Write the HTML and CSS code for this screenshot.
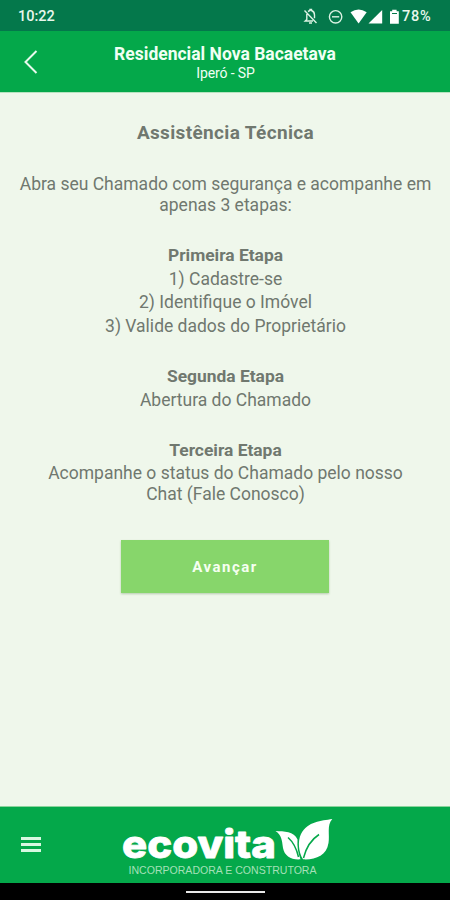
FILE: index.html
```html
<!DOCTYPE html>
<html lang="pt-BR">
<head>
<meta charset="utf-8">
<title>Assistência Técnica</title>
<link rel="stylesheet" href="styles.css">
</head>
<body>
<div class="status">
  <span class="clock">10:22</span>
  <svg class="status-icons" width="98" height="18" viewBox="302 7 98 18" fill="none" stroke="#dcf3e4" stroke-width="1.4">
    <path d="M304.500 9.500 316.500 22M308 10.500Q309 10 310 9.500V8.500H311.500V9.500Q314.500 10.500 314.500 14V17.200M306.800 13V18.500L305.200 20H313M309 22H312"/>
    <circle cx="335.600" cy="15.800" r="6.200"/><path d="M332 15.800H339.200"/>
    <g fill="#fff" stroke="none"><path d="M350.500 11.300Q358.600 5.800 366.700 11.300L358.600 22.500Z"/><path d="M382.200 9V22.500H368.500Z"/><path d="M390 10.200H392.200V8.700H396.600V10.200H398.800V22.800H390Z"/></g>
    <path d="M392 12.500H397" stroke="#04784b" stroke-width="1"/>
  </svg>
  <span class="battery">78%</span>
</div>
<header class="topbar">
  <svg class="back" width="16" height="26" viewBox="0 0 16 26" fill="none" stroke="#e8faed" stroke-width="2"><path d="M14.500 2 3.500 13 14.500 24"/></svg>
  <div class="heading"><div class="project">Residencial Nova Bacaetava</div><div class="city">Iperó - SP</div></div>
</header>
<main>
  <h1>Assistência Técnica</h1>
  <p class="intro">Abra seu Chamado com segurança e acompanhe em<br>apenas 3 etapas:</p>
  <section><h2>Primeira Etapa</h2><p>1) Cadastre-se</p><p>2) Identifique o Imóvel</p><p>3) Valide dados do Proprietário</p></section>
  <section><h2>Segunda Etapa</h2><p>Abertura do Chamado</p></section>
  <section><h2>Terceira Etapa</h2><p>Acompanhe o status do Chamado pelo nosso<br>Chat (Fale Conosco)</p></section>
  <button type="button">Avançar</button>
</main>
<footer>
  <div class="menu"><i></i><i></i><i></i></div>
  <svg class="logo" width="214" height="62" viewBox="120 815 214 62" fill="#fff">
    <text class="brand" x="122" y="858" textLength="154" lengthAdjust="spacingAndGlyphs">ecovita</text>
    <text class="tagline" x="128.500" y="874" textLength="188" lengthAdjust="spacingAndGlyphs">INCORPORADORA E CONSTRUTORA</text>
    <path d="M275.500 831C284 831.500 294 831 297.500 839.500C297 847 298 853 300.500 859.300C291 860 284.500 856 283 848C282 840 281.500 835 275.500 831Z"/>
    <path d="M332.300 819C326.500 825 330 835 328.500 843C326.500 856 315 860 303 859.300C298.500 852 297.500 841 301 834C308 821 321 821 332.300 819Z"/>
    <path d="M288 837.500Q295.500 844 298.500 857M319 834.500Q307.500 842 303.500 858" fill="none" stroke="#04a84a" stroke-width="1.500"/>
  </svg>
</footer>
<div class="nav"><i></i></div>
</body>
</html>
```
FILE: styles.css
```css
* { box-sizing: border-box; }
body { margin: 0; width: 450px; height: 900px; display: flex; flex-direction: column; overflow: hidden; background: #eff7eb; font-family: Roboto, sans-serif; color: #70786f; }
h1, h2, p { margin: 0; }
.status { height: 31px; flex: none; background: #04784b; color: #e8f7ed; display: flex; align-items: center; padding: 2px 17px 0 18px; font-size: 14.5px; font-weight: 500; }
.clock { flex: 1; }
.battery { width: 31px; margin-left: 2px; font-size: 14.5px; letter-spacing: 0.8px; }
.topbar { height: 61px; flex: none; background: #04a84a; color: #f0fff4; display: grid; grid-template-columns: 60px 1fr 60px; align-items: center; }
.back { margin-left: 22px; }
.heading { text-align: center; white-space: nowrap; padding-top: 2px; }
.project { font-size: 17.500px; line-height: 20px; font-weight: 700; }
.city { font-size: 14px; line-height: 18px; letter-spacing: -0.1px; padding-left: 1px; }
main { flex: 1; border-top: 1px solid #b7e3c0; padding-top: 28px; text-align: center; font-size: 17.500px; line-height: 21px; white-space: nowrap; }
h1 { font-size: 19px; line-height: 23px; font-weight: 700; letter-spacing: 0.350px; margin-bottom: 30px; padding-left: 1px; }
h2 { font-size: 17.400px; line-height: 21px; font-weight: 700; }
p, h2 { padding-left: 1px; }
section { margin-top: 29px; }
section p { margin-top: 2.700px; }
button { display: block; width: 208px; height: 53px; margin: 35px auto 0; border: 0; background: #87d66b; color: #f6fff1; font: 700 15px Roboto, sans-serif; letter-spacing: 1.500px; box-shadow: 0 1px 2px #b5cbae; padding: 1px 0 0 0; }
footer { height: 77px; flex: none; background: #04a84a; border-top: 1px solid #8bd49c; display: flex; align-items: flex-start; }
.menu { width: 20px; margin: 30px 79px 0 21px; display: flex; flex-direction: column; gap: 3px; }
.menu i { height: 3px; background: #d8f8e1; }
.logo { margin-top: 8px; }
.brand { font: 800 39px Inter, sans-serif; stroke: #fff; stroke-width: 0.800px; stroke-linejoin: round; }
.tagline { font: 300 10.500px "Liberation Sans", sans-serif; fill: #a5e0b8; }
.nav { height: 17px; flex: none; background: #000; display: flex; justify-content: center; align-items: center; }
.nav i { width: 79px; height: 2px; background: #e8e8e8; margin-top: 1px; }
```
